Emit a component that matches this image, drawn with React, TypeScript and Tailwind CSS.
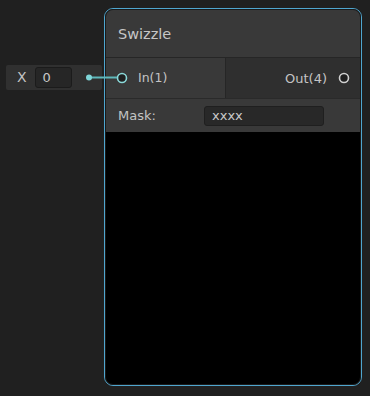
import React from "react";

const font = { fontFamily: '"DejaVu Sans", "Liberation Sans", sans-serif' };

function PortCircle({ color }: { color: string }) {
  return (
    <svg width="12" height="12" viewBox="0 0 12 12" className="shrink-0">
      <circle cx="6" cy="6" r="4.5" fill="#1f1f1f" stroke={color} strokeWidth="1.6" />
    </svg>
  );
}

function PropertyField() {
  return (
    <div className="mt-[65px] ml-[6px] flex h-[25px] w-[96px] items-center rounded-[2px] bg-[#303030]">
      <span className="ml-[11px] text-[14px] text-[#c4c4c4]">X</span>
      <div className="ml-[8px] flex h-[21px] w-[37px] items-center rounded-[3px] border border-[#1b1b1b] bg-[#262626] pl-[7px] text-[13px] text-[#c8c8c8]">
        0
      </div>
    </div>
  );
}

function SwizzleNode() {
  return (
    <div className="ml-[2px] mt-[8px] h-[378px] w-[258px] rounded-[9px] border border-[#4fa6cf]">
      <div className="flex h-full flex-col overflow-hidden rounded-[8px] border border-[#1a1a1a]">
        <div className="flex h-[48px] shrink-0 items-center border-b border-[#262626] bg-[#393939] pl-[12px] pt-[2px] text-[14.5px] text-[#c6c6c6]">
          Swizzle
        </div>
        <div className="flex h-[41px] shrink-0 border-b border-[#2a2a2a]">
          <div className="flex w-[120px] items-center border-r border-[#262626] bg-[#393939] pl-[10px]">
            <PortCircle color="#8ad8d8" />
            <span className="ml-[10px] pt-[1px] text-[12.5px] text-[#c4c4c4]">In(1)</span>
          </div>
          <div className="flex flex-1 items-center justify-end bg-[#2f2f2f] pr-[10px]">
            <span className="mr-[11px] pt-[1px] text-[13px] text-[#c4c4c4]">Out(4)</span>
            <PortCircle color="#d0d0d0" />
          </div>
        </div>
        <div className="flex h-[33px] shrink-0 items-center bg-[#393939] pl-[12px]">
          <span className="w-[86px] text-[13px] text-[#c4c4c4]">Mask:</span>
          <div className="flex h-[20px] w-[120px] items-center rounded-[3px] border border-[#1f1f1f] bg-[#282828] pl-[7px] text-[13px] text-[#cacaca]">
            xxxx
          </div>
        </div>
        <div className="flex-1 bg-black" />
      </div>
    </div>
  );
}

export default function App() {
  return (
    <div className="relative flex h-[396px] w-[370px] items-start bg-[#202020]" style={font}>
      <PropertyField />
      <SwizzleNode />
      <svg
        className="pointer-events-none absolute left-0 top-0"
        width="370"
        height="396"
        viewBox="0 0 370 396"
      >
        <line x1="89" y1="77.5" x2="117" y2="77.5" stroke="#5fb8bb" strokeWidth="2" />
        <circle cx="89" cy="77.5" r="3" fill="#7fd6d8" />
      </svg>
    </div>
  );
}
